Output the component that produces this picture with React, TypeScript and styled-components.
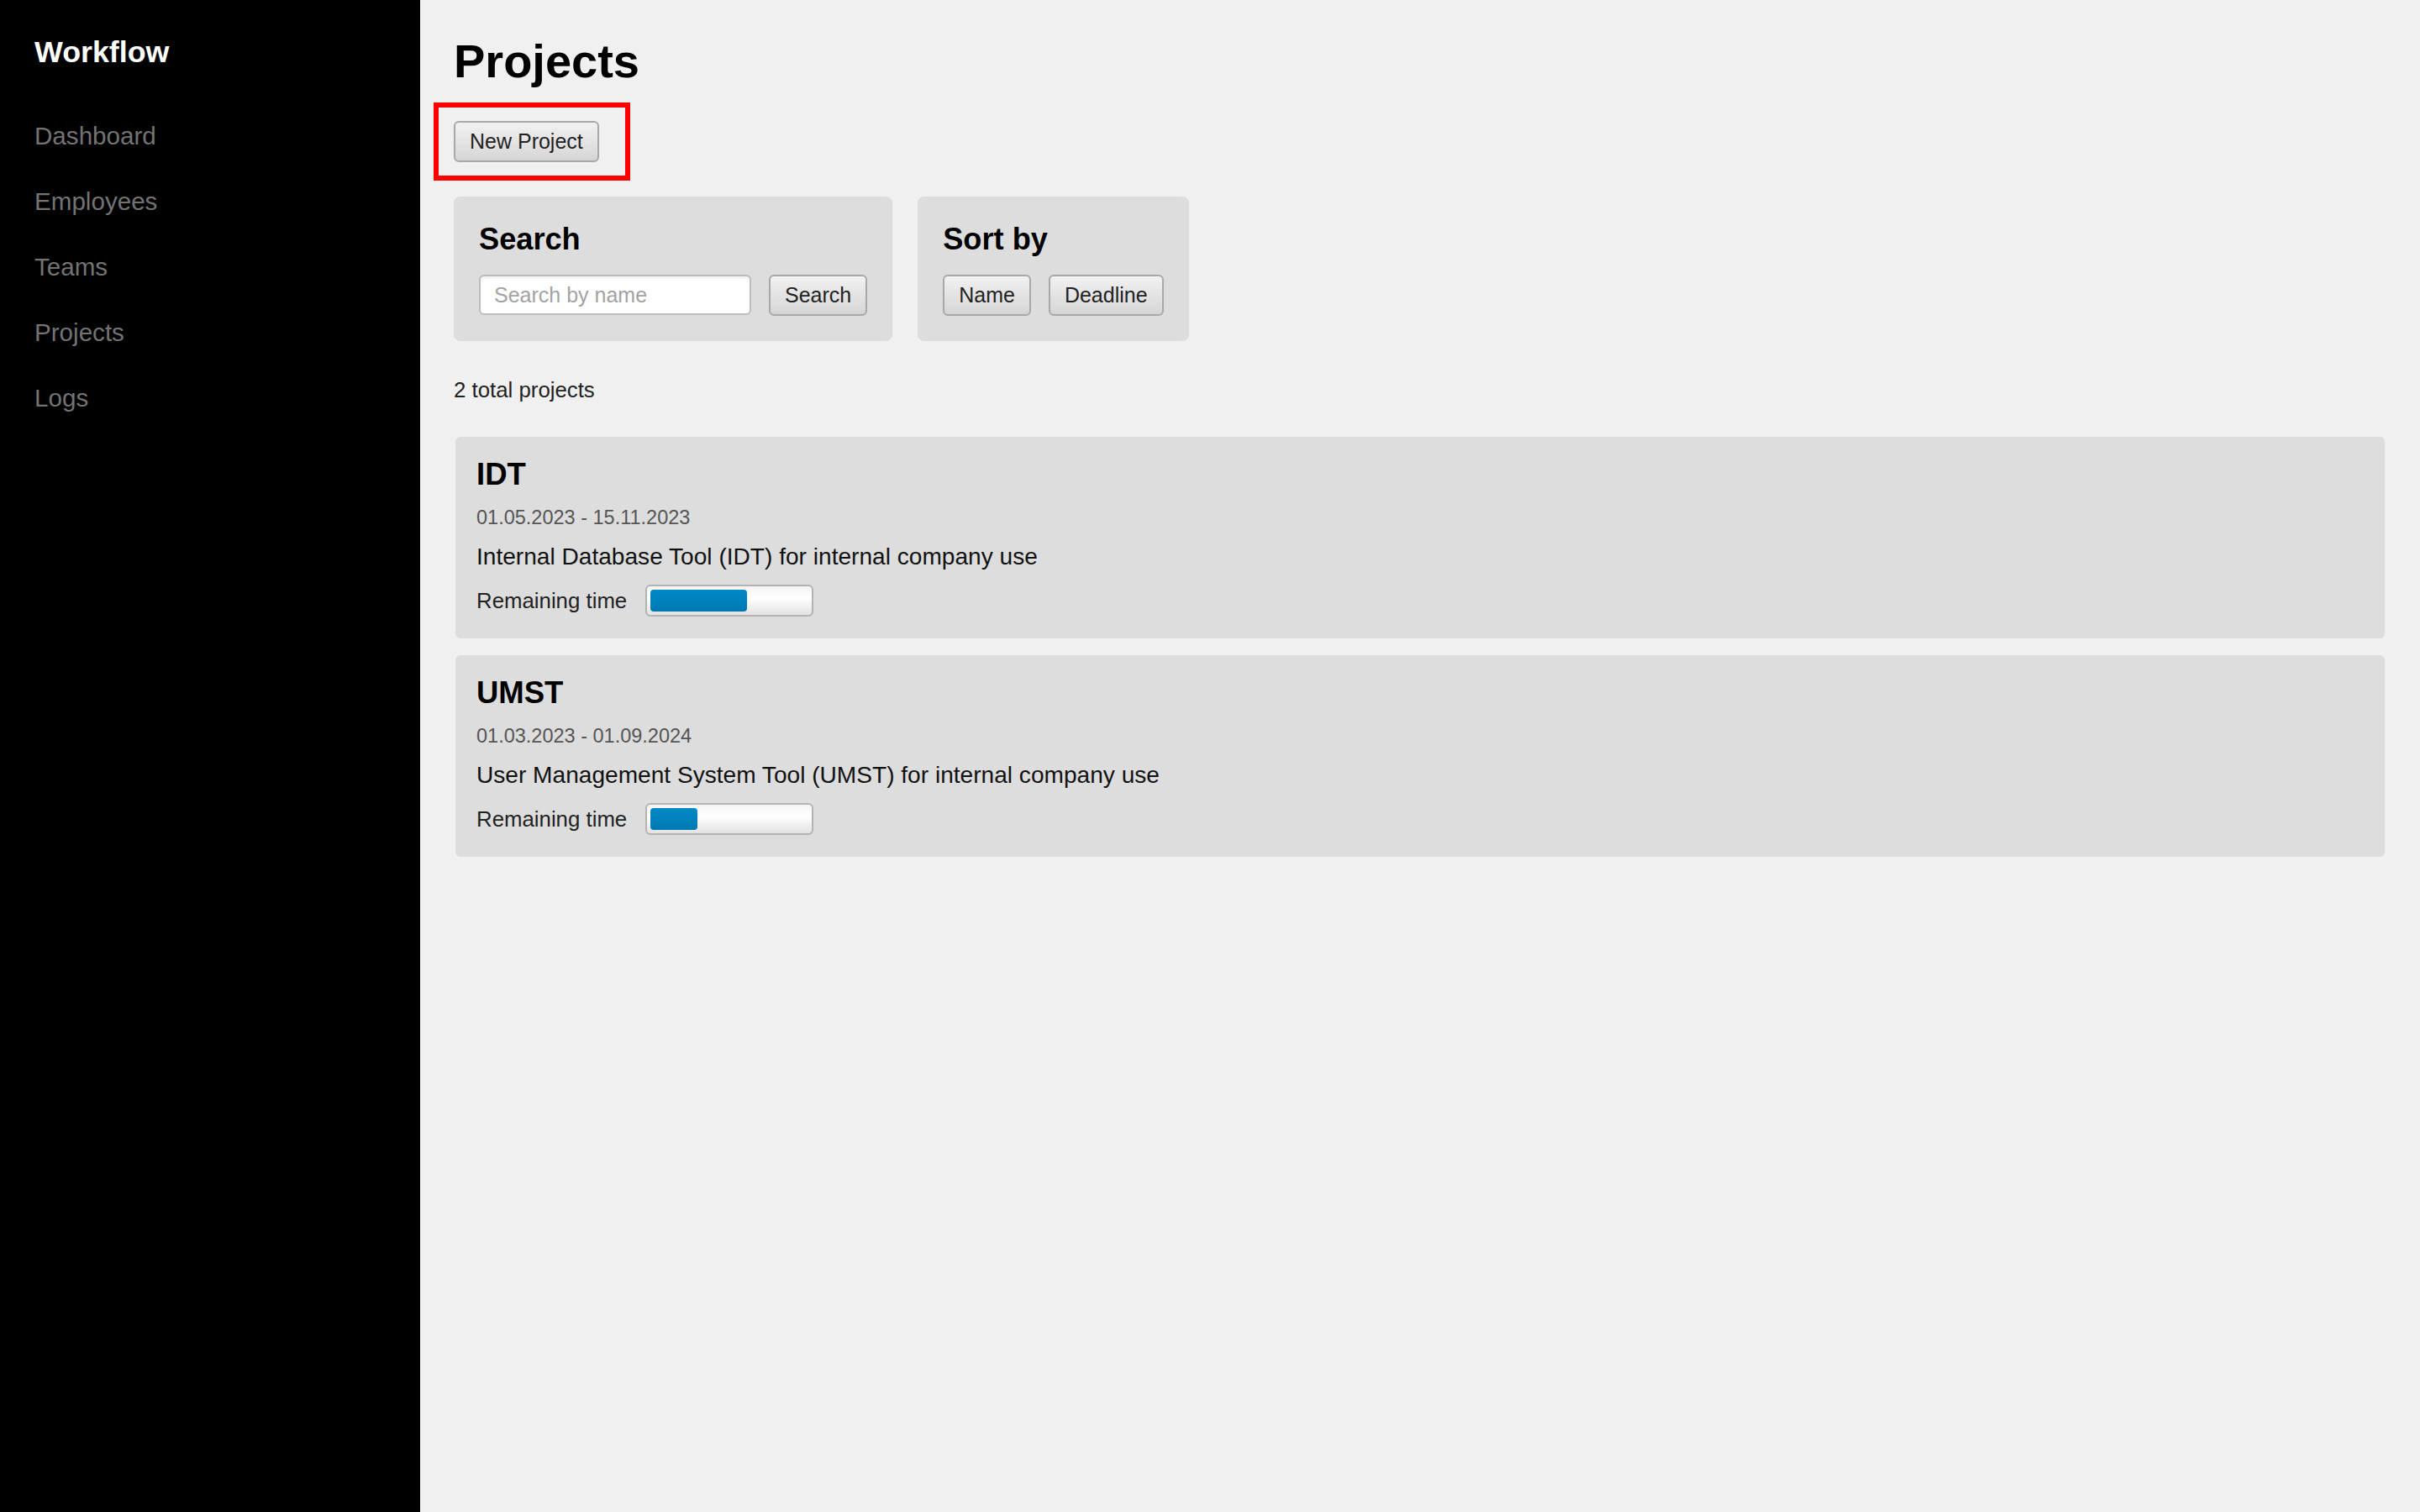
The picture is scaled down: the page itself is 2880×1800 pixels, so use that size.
import React from "react";
import styled, { createGlobalStyle } from "styled-components";

const GlobalStyle = createGlobalStyle`
  html, body {
    margin: 0;
    padding: 0;
    background: #f0f0f0;
    font-family: "Liberation Sans", Arial, Helvetica, sans-serif;
  }
  * { box-sizing: border-box; }
`;

const Layout = styled.div`
  display: flex;
  min-height: 100vh;
`;

const Sidebar = styled.aside`
  width: 500px;
  flex: 0 0 500px;
  background: #000;
  padding: 42px 41px;
  display: flex;
  flex-direction: column;
`;

const Brand = styled.div`
  color: #fff;
  font-size: 35.8px;
  font-weight: 700;
  line-height: 40px;
  margin-bottom: 63px;
`;

const NavList = styled.nav`
  display: flex;
  flex-direction: column;
  gap: 44px;
`;

const NavLink = styled.a`
  color: #737373;
  font-size: 29.6px;
  line-height: 34px;
  text-decoration: none;
  cursor: pointer;
`;

const Main = styled.main`
  flex: 1;
  padding: 39px 40px 40px 40px;
  display: flex;
  flex-direction: column;
  align-items: flex-start;
`;

const Title = styled.h1`
  margin: 0 0 16px;
  font-size: 56px;
  line-height: 67px;
  font-weight: 700;
  color: #000;
`;

const Highlight = styled.div`
  border: 6px solid #ff0000;
  padding: 16px 31px 16px 18px;
  margin-left: -24px;
`;

const Button = styled.button`
  height: 49px;
  padding: 0 17px;
  font-family: "Liberation Sans", Arial, sans-serif;
  font-size: 25px;
  color: #222;
  background: linear-gradient(#f1f1f1, #dadada 85%, #d3d3d3);
  border: 2px solid #a8a8a8;
  border-radius: 6px;
  cursor: pointer;
  white-space: nowrap;
`;

const FilterRow = styled.div`
  display: flex;
  gap: 30px;
  margin-top: 19px;
`;

const Panel = styled.section`
  background: #dddddd;
  border-radius: 8px;
  padding: 30px;
`;

const PanelTitle = styled.h3`
  margin: 0 0 21px;
  font-size: 36.2px;
  line-height: 42px;
  font-weight: 700;
  color: #000;
`;

const Controls = styled.div`
  display: flex;
  gap: 21px;
  align-items: flex-start;
`;

const SearchInput = styled.input`
  width: 324px;
  height: 48px;
  padding: 0 16px;
  font-family: "Liberation Sans", Arial, sans-serif;
  font-size: 25px;
  color: #222;
  background: #fff;
  border: 2px solid #bcbcbc;
  border-radius: 6px;
  box-shadow: inset 0 4px 4px -2px rgba(0, 0, 0, 0.08);
  outline: none;
  &::placeholder {
    color: #a3a3a3;
  }
`;

const Total = styled.p`
  margin: 44px 0 0;
  font-size: 25.8px;
  line-height: 29px;
  color: #222;
`;

const ProjectList = styled.div`
  align-self: stretch;
  display: flex;
  flex-direction: column;
  gap: 20px;
  margin: 41px 2px 0;
`;

const Card = styled.article`
  background: #dddddd;
  border-radius: 6px;
  padding: 23px 25px 26px;
  display: flex;
  flex-direction: column;
`;

const CardTitle = styled.h3`
  margin: 0 0 18px;
  font-size: 36.5px;
  line-height: 43px;
  font-weight: 700;
  color: #000;
`;

const Dates = styled.div`
  font-size: 23.5px;
  line-height: 25px;
  color: #555;
  margin-bottom: 18px;
`;

const Description = styled.p`
  margin: 0 0 17px;
  font-size: 28.1px;
  line-height: 32px;
  color: #111;
`;

const RemainingRow = styled.div`
  display: flex;
  align-items: center;
  gap: 22px;
  height: 38px;
  font-size: 25.8px;
  color: #222;
`;

const Track = styled.div`
  width: 200px;
  height: 38px;
  padding: 4px;
  border: 2px solid #b3b3b3;
  border-radius: 6px;
  background: linear-gradient(#f4f4f4, #ffffff 40%, #e2e2e2);
  display: flex;
`;

const Fill = styled.div`
  height: 100%;
  border-radius: 4px;
  background: linear-gradient(#0089c6, #0080bb 60%, #0077b0);
`;

type Project = {
  code: string;
  start: string;
  end: string;
  description: string;
  remaining: number;
};

const projects: Project[] = [
  {
    code: "IDT",
    start: "01.05.2023",
    end: "15.11.2023",
    description: "Internal Database Tool (IDT) for internal company use",
    remaining: 61.2,
  },
  {
    code: "UMST",
    start: "01.03.2023",
    end: "01.09.2024",
    description: "User Management System Tool (UMST) for internal company use",
    remaining: 29.8,
  },
];

const navItems = ["Dashboard", "Employees", "Teams", "Projects", "Logs"];

export default function App() {
  return (
    <>
      <GlobalStyle />
      <Layout>
        <Sidebar>
          <Brand>Workflow</Brand>
          <NavList>
            {navItems.map((item) => (
              <NavLink key={item}>{item}</NavLink>
            ))}
          </NavList>
        </Sidebar>
        <Main>
          <Title>Projects</Title>
          <Highlight>
            <Button>New Project</Button>
          </Highlight>
          <FilterRow>
            <Panel>
              <PanelTitle>Search</PanelTitle>
              <Controls>
                <SearchInput placeholder="Search by name" />
                <Button>Search</Button>
              </Controls>
            </Panel>
            <Panel>
              <PanelTitle>Sort by</PanelTitle>
              <Controls>
                <Button>Name</Button>
                <Button>Deadline</Button>
              </Controls>
            </Panel>
          </FilterRow>
          <Total>2 total projects</Total>
          <ProjectList>
            {projects.map((p) => (
              <Card key={p.code}>
                <CardTitle>{p.code}</CardTitle>
                <Dates>
                  {p.start} - {p.end}
                </Dates>
                <Description>{p.description}</Description>
                <RemainingRow>
                  <span>Remaining time</span>
                  <Track>
                    <Fill style={{ width: `${p.remaining}%` }} />
                  </Track>
                </RemainingRow>
              </Card>
            ))}
          </ProjectList>
        </Main>
      </Layout>
    </>
  );
}
